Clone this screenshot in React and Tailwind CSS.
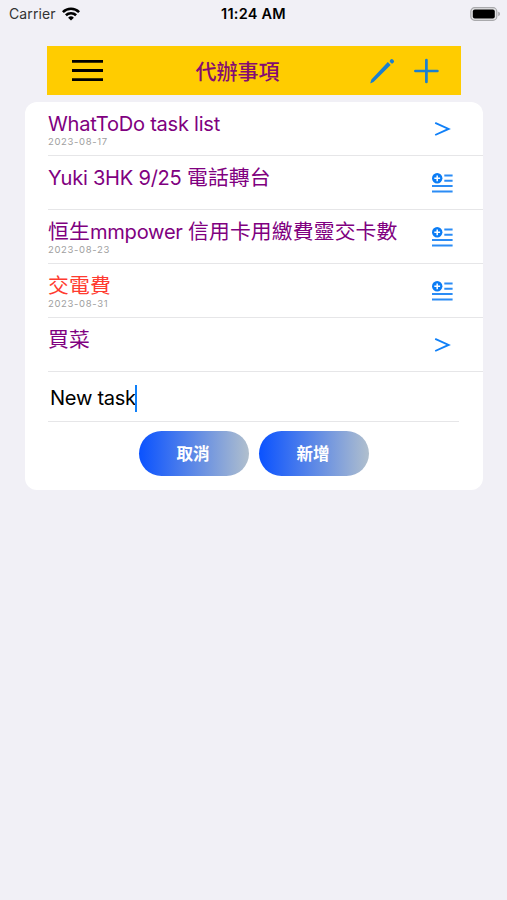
import React from "react";

const tasks = [
    { title: "WhatToDo task list", date: "2023-08-17", titleClass: "text-[#800080]", icon: "open" },
    { title: "Yuki 3HK 9/25 電話轉台", titleClass: "text-[#800080]", icon: "detail" },
    { title: "恒生mmpower 信用卡用繳費靈交卡數", date: "2023-08-23", titleClass: "text-[#800080]", icon: "detail" },
    { title: "交電費", date: "2023-08-31", titleClass: "text-[#ff3b30]", icon: "detail" },
    { title: "買菜", titleClass: "text-[#800080]", icon: "open" },
];

const WifiIcon = () => (
    <svg width="18" height="14" viewBox="0 0 18 14" fill="none" stroke="#000" strokeWidth="2.6">
        <path d="M0.9 5.1 A11.5 11.5 0 0 1 17.1 5.1" />
        <path d="M3.9 8.3 A7.3 7.3 0 0 1 14.1 8.3" />
        <path d="M9 13.6 L6.1 10.7 A4.2 4.2 0 0 1 11.9 10.7 Z" fill="#000" stroke="none" />
    </svg>
);

const BatteryIcon = () => (
    <svg width="31" height="14" viewBox="0 0 31 14">
        <rect x="0.8" y="0.7" width="26" height="12.6" rx="3.8" fill="#e4e4e6" stroke="#a9a9ac" strokeWidth="1.2" />
        <rect x="2.8" y="2.6" width="22" height="8.8" rx="2" fill="#000" />
        <path d="M28.2 4.8 C30.6 5.4 30.6 8.6 28.2 9.2 Z" fill="#a9a9ac" />
    </svg>
);

const MenuIcon = () => (
    <svg width="31" height="23" viewBox="0 0 31 23" stroke="#000" strokeWidth="2.8">
        <path d="M0 2.4 H31 M0 11.5 H31 M0 20.6 H31" />
    </svg>
);

const PencilIcon = () => (
    <svg width="26" height="26" viewBox="0 0 26 26" fill="#1a7fd0">
        <path d="M18.8 4.1 L21.7 7 L4.5 24.1 L1.8 25.2 Q1.2 25.3 1.4 24.7 L2.4 21.6 Z" />
        <rect x="20.8" y="1.3" width="4.2" height="3.8" rx="1.6" transform="rotate(45 22.9 3.2)" />
    </svg>
);

const PlusIcon = () => (
    <svg width="26" height="26" viewBox="0 0 26 26" stroke="#1a7fd0" strokeWidth="2.7" strokeLinecap="round">
        <path d="M13.4 2 V24 M2.4 13 H24.4" />
    </svg>
);

const OpenIcon = () => (
    <svg width="21" height="20" viewBox="0 0 21 20" fill="none" stroke="#1080f8" strokeWidth="1.9">
        <path d="M3.2 3.8 L16.6 9.9 L3.2 16" />
    </svg>
);

const DetailIcon = () => (
    <svg width="21" height="20" viewBox="0 0 21 20" fill="none">
        <circle cx="5.2" cy="5.3" r="5.2" fill="#0a7cf5" />
        <path d="M5.2 2.4 V8.2 M2.3 5.3 H8.1" stroke="#fff" strokeWidth="1.5" />
        <path d="M12.3 2.5 H20.6 M12.3 7.8 H20.6 M0 13 H20.6 M0 18.6 H20.6" stroke="#2b8cf5" strokeWidth="2" />
    </svg>
);

// latin runs are set a little smaller and tighter than the Chinese ones
const TaskTitle = ({ title }) =>
    title.split(/([\x20-\x7e]+)/).map((run, i) => (
        <span key={i} className={i % 2 ? "text-[20.1px] tracking-[-0.26px]" : "tracking-[0.15px]"}>{run}</span>
    ));

const TaskRow = ({ task }) => (
    <li className="flex justify-between h-[54px] pr-[30px] border-b border-[#e6e6e8]">
        <div className="pt-[10px]">
            <div className={`text-[20.8px] leading-[24px] whitespace-nowrap ${task.titleClass}`}>
                <TaskTitle title={task.title} />
            </div>
            {task.date && <div className="mt-px text-[9.5px] leading-[10px] tracking-[0.65px] text-[#a0a0a0]">{task.date}</div>}
        </div>
        <button className="self-start mt-[17px]">{task.icon === "open" ? <OpenIcon /> : <DetailIcon />}</button>
    </li>
);

const PillButton = ({ children }) => (
    <button className="w-[110px] h-[45px] pr-[2px] pt-[2px] rounded-full bg-[linear-gradient(to_right,#0a52ff,#b0bfcd)] text-white text-[16.5px] font-bold">
        {children}
    </button>
);

export default function App() {
    return (
        <div className="h-[900px] bg-[#f1f0f6] font-['Inter','Noto_Sans_CJK_TC',sans-serif] overflow-hidden">
            <div className="grid grid-cols-[1fr_auto_1fr] items-center h-[27px] pl-[9px] pr-[6px] text-[14px]">
                <div className="flex items-center gap-[6px] text-[#333]">
                    <span className="tracking-[0.1px]">Carrier</span>
                    <WifiIcon />
                </div>
                <span className="-ml-[3px] text-center text-[14.5px] tracking-[0.25px] font-semibold text-black">11:24 AM</span>
                <div className="flex justify-end"><BatteryIcon /></div>
            </div>

            <header className="flex justify-between items-center mt-[19px] ml-[47px] w-[414px] h-[49px] pl-[25px] pr-[22px] bg-[#ffcc00]">
                <button><MenuIcon /></button>
                <h1 className="pl-[3px] pt-[2px] text-[21px] font-medium text-[#850c72] whitespace-nowrap">代辦事項</h1>
                <div className="flex gap-[18px]">
                    <PencilIcon />
                    <PlusIcon />
                </div>
            </header>

            <main className="mt-[7px] mx-[25px] w-[458px] h-[388px] pl-[23px] rounded-[12px] bg-white">
                <ul>
                    {tasks.map((task) => (
                        <TaskRow key={task.title} task={task} />
                    ))}
                </ul>
                <div className="flex items-center mr-[24px] h-[50px] pl-[2px] pt-[4px] border-b border-[#e6e6e8] text-[20.1px] text-black">
                    <span className="tracking-[-0.3px]">New task</span>
                    <span className="-ml-px w-[2.5px] h-[27px] bg-[#1080f8]" />
                </div>
                <div className="flex justify-center gap-[10px] pt-[9px] pr-[23px]">
                    <PillButton>取消</PillButton>
                    <PillButton>新增</PillButton>
                </div>
            </main>
        </div>
    );
}
